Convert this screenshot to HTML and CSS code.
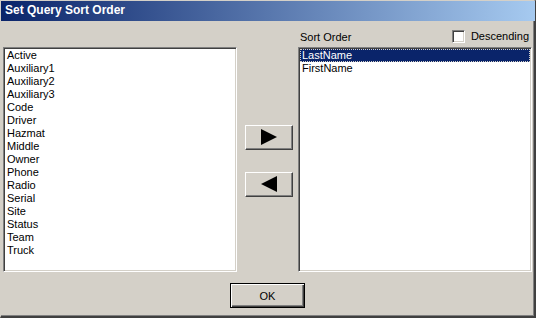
FILE: index.html
```html
<!DOCTYPE html>
<html lang="en">
<head>
    <meta charset="UTF-8">
    <title>Set Query Sort Order</title>
    <link rel="stylesheet" href="styles.css">
</head>
<body>
    <div class="window">
        <div class="titlebar">Set Query Sort Order</div>
        <div class="content">
            <div class="panes">
                <div class="spacer"></div>
                <div class="spacer"></div>
                <div class="right-head">
                    <span class="label">Sort Order</span>
                    <label class="check"><span class="box"></span>Descending</label>
                </div>

                <ul class="listbox">
                    <li>Active</li>
                    <li>Auxiliary1</li>
                    <li>Auxiliary2</li>
                    <li>Auxiliary3</li>
                    <li>Code</li>
                    <li>Driver</li>
                    <li>Hazmat</li>
                    <li>Middle</li>
                    <li>Owner</li>
                    <li>Phone</li>
                    <li>Radio</li>
                    <li>Serial</li>
                    <li>Site</li>
                    <li>Status</li>
                    <li>Team</li>
                    <li>Truck</li>
                </ul>

                <div class="movers">
                    <button class="btn arrow">
                        <svg width="16" height="16" viewBox="0 0 16 16"><polygon points="0,0 16,8 0,16" fill="#000"/></svg>
                    </button>
                    <button class="btn arrow">
                        <svg width="16" height="16" viewBox="0 0 16 16"><polygon points="16,0 0,8 16,16" fill="#000"/></svg>
                    </button>
                </div>

                <ul class="listbox">
                    <li class="selected">LastName</li>
                    <li>FirstName</li>
                </ul>
            </div>
            <div class="footer">
                <button class="btn default">OK</button>
            </div>
        </div>
    </div>
</body>
</html>
```

FILE: styles.css
```css
* {
    box-sizing: border-box;
}
body {
    margin: 0;
    background: #d4d0c8;
    font-family: "Liberation Sans", Arial, sans-serif;
    font-size: 11px;
    color: #000;
}
.window {
    width: 536px;
    height: 318px;
    display: flex;
    flex-direction: column;
    background: #d4d0c8;
    border-top: 1px solid #d4d0c8;
    border-left: 1px solid #d4d0c8;
    border-right: 2px solid #404040;
    border-bottom: 2px solid #404040;
    box-shadow: inset -1px -1px 0 #808080;
}
.titlebar {
    height: 20px;
    padding-left: 4px;
    line-height: 19px;
    color: #fff;
    font-weight: bold;
    font-size: 12px;
    background: linear-gradient(to right, #0a246a, #a6caf0);
    margin-right: -1px;
}
.content {
    flex: 1;
    display: flex;
    flex-direction: column;
    padding: 0 2px 0 2px;
}
.panes {
    display: grid;
    grid-template-columns: 234px 1fr 234px;
    grid-template-rows: 26px 225px;
}
.right-head {
    display: flex;
    justify-content: space-between;
    align-items: flex-end;
    padding: 0 3px 4px 2px;
}
.label {
    line-height: 13px;
    margin-bottom: -1px;
}
.check {
    display: flex;
    align-items: center;
    gap: 6px;
    line-height: 13px;
}
.box {
    width: 13px;
    height: 13px;
    background: #fff;
    border-top: 1px solid #808080;
    border-left: 1px solid #808080;
    border-right: 1px solid #fff;
    border-bottom: 1px solid #fff;
    box-shadow: inset 1px 1px 0 #404040, inset -1px -1px 0 #d4d0c8;
}
.listbox {
    list-style: none;
    margin: 0;
    padding: 0;
    background: #fff;
    border-top: 1px solid #808080;
    border-left: 1px solid #808080;
    border-right: 1px solid #fff;
    border-bottom: 1px solid #fff;
    box-shadow: inset 1px 1px 0 #404040, inset -1px -1px 0 #d4d0c8;
    padding: 1px;
}
.listbox li {
    height: 13px;
    line-height: 13px;
    padding-left: 2px;
}
.listbox li.selected {
    background: #0a246a;
    color: #fff;
    outline: 1px dotted #d4d0c8;
    outline-offset: -1px;
}
.movers {
    display: flex;
    flex-direction: column;
    gap: 22px;
    padding: 78px 0 0 8px;
}
.btn {
    font: inherit;
    color: #000;
    background: #d4d0c8;
    border-top: 1px solid #fff;
    border-left: 1px solid #fff;
    border-right: 1px solid #404040;
    border-bottom: 1px solid #404040;
    box-shadow: inset -1px -1px 0 #808080;
    padding: 0;
    display: flex;
    align-items: center;
    justify-content: center;
}
.arrow {
    width: 48px;
    height: 25px;
}
.arrow svg {
    margin-top: -1px;
}
.footer {
    display: flex;
    justify-content: center;
    padding-top: 11px;
}
.default {
    width: 75px;
    height: 25px;
    border: 1px solid #000;
    box-shadow: inset 1px 1px 0 #fff, inset -1px -1px 0 #404040, inset -2px -2px 0 #808080;
}
```
